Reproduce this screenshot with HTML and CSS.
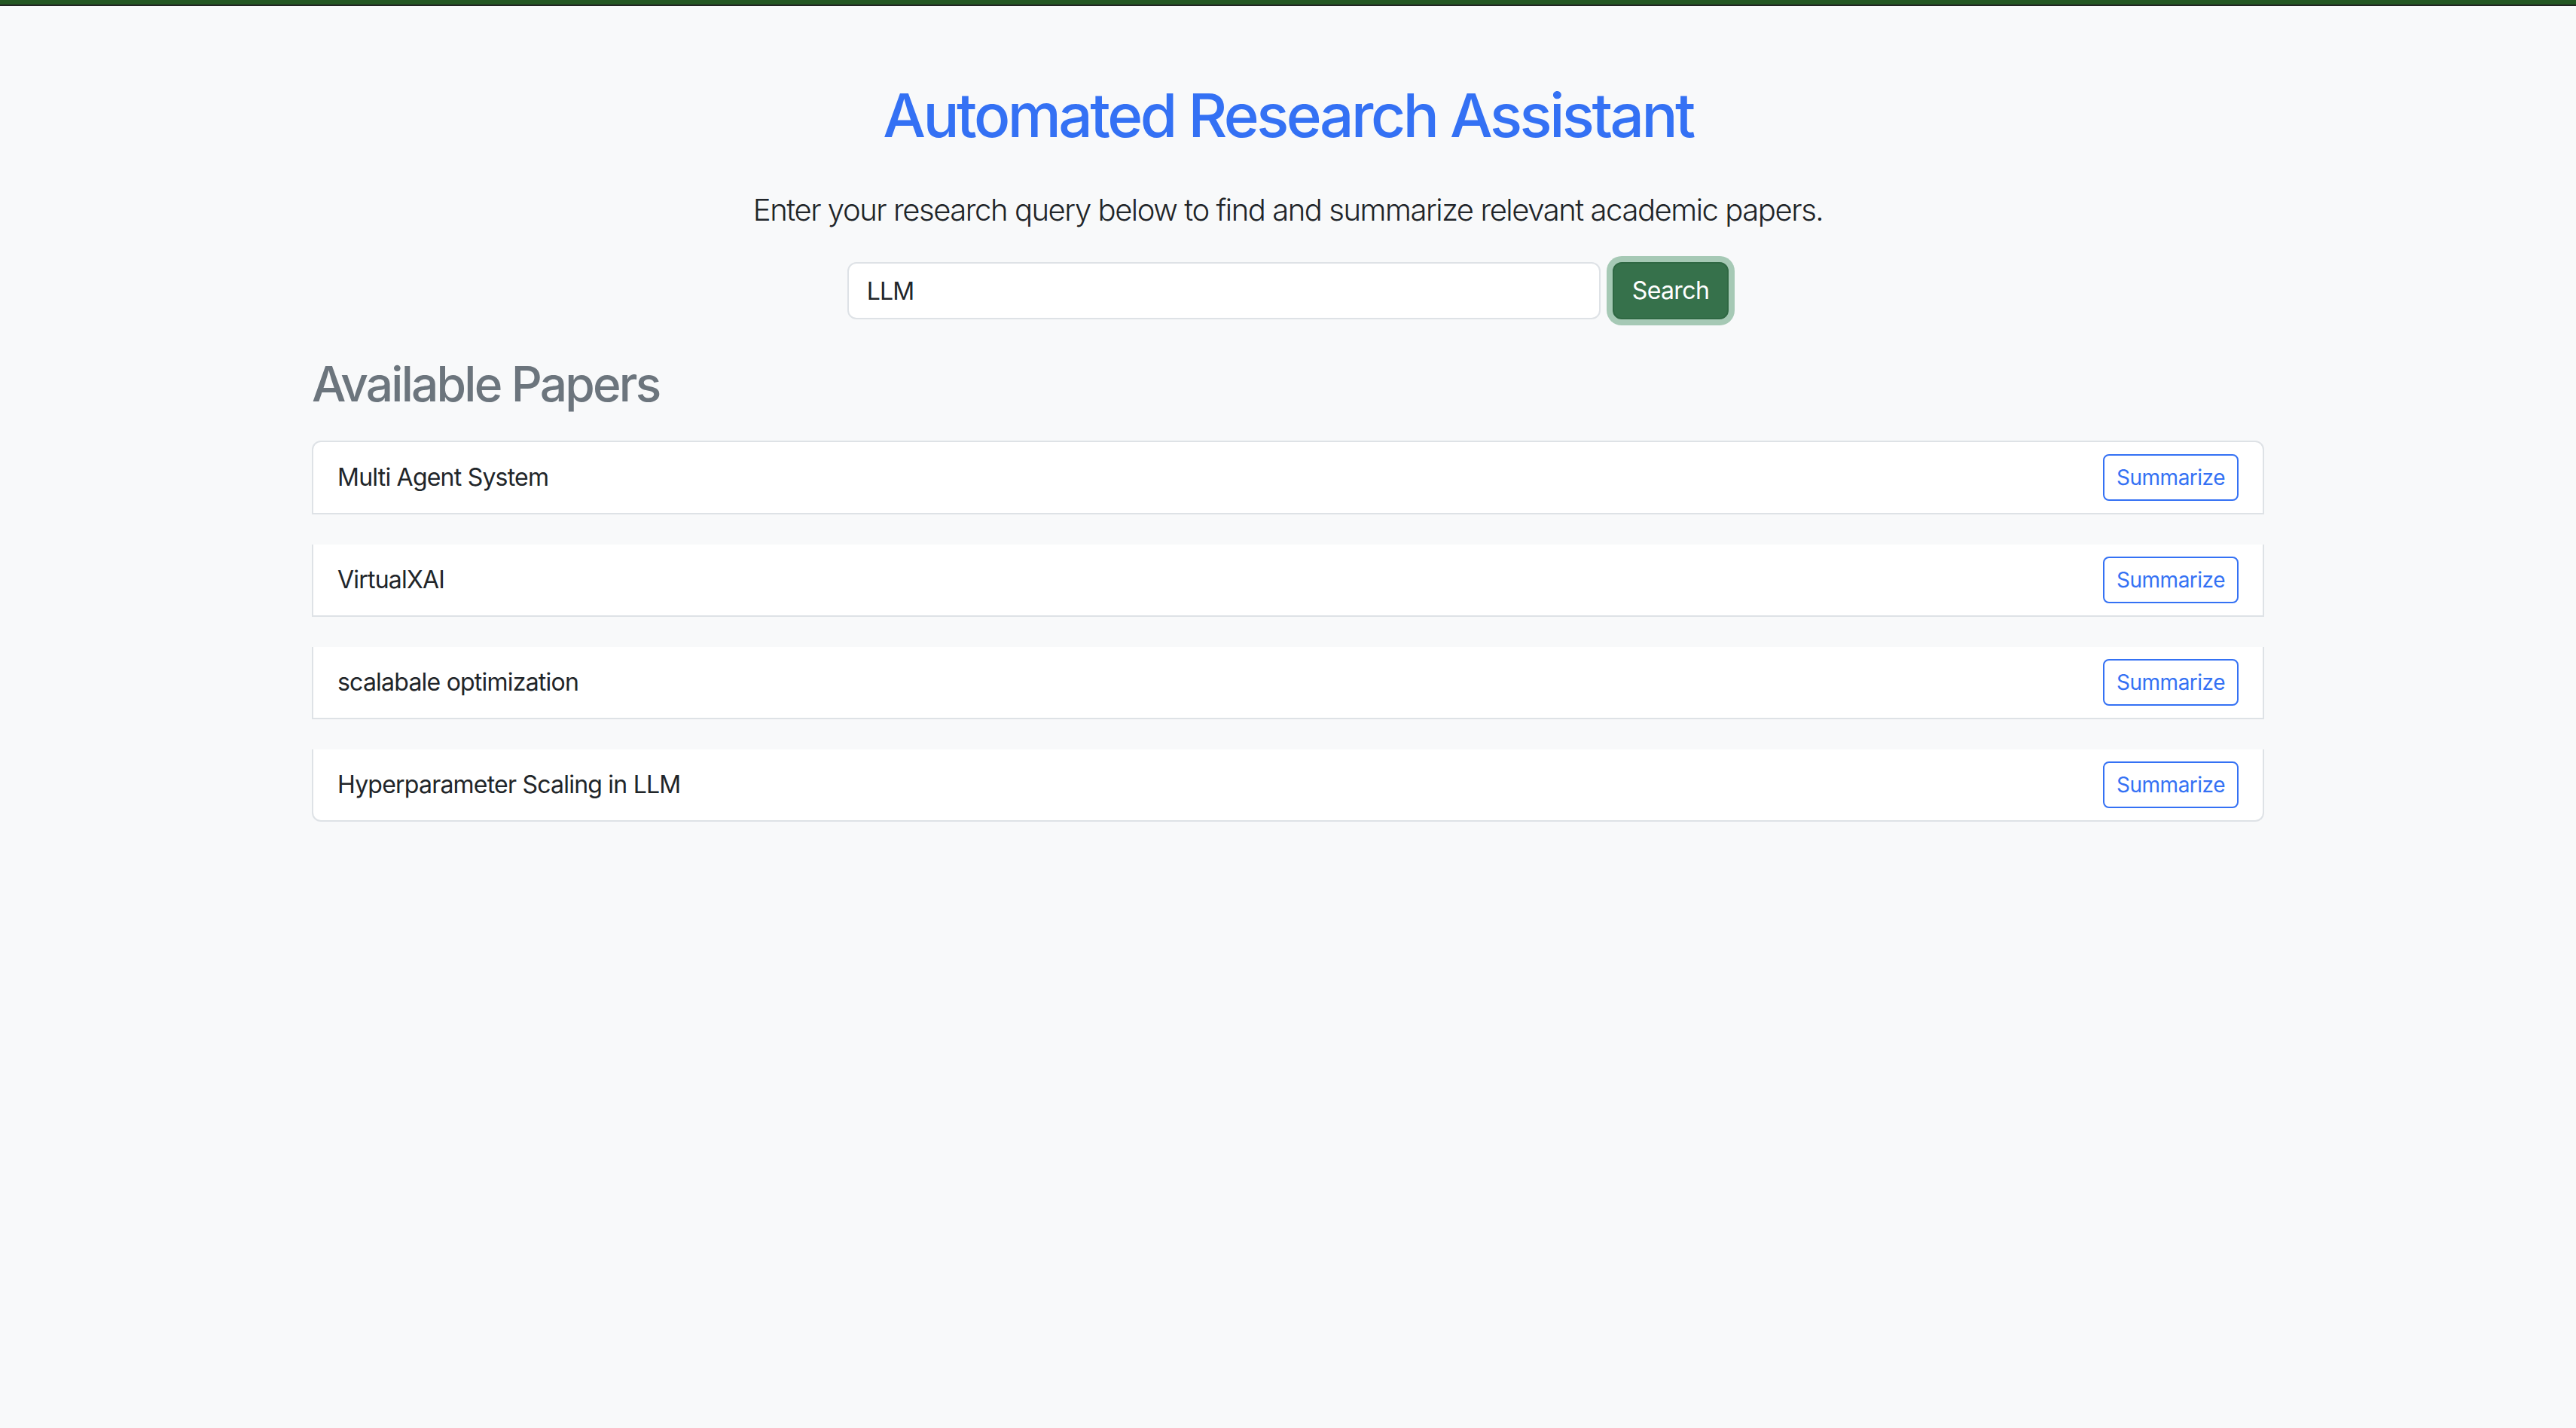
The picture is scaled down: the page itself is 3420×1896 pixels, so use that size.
FILE: index.html
```html
<!DOCTYPE html>
<html lang="en">
<head>
<meta charset="utf-8">
<title>Automated Research Assistant</title>
<link rel="stylesheet" href="styles.css">
</head>
<body>
<div class="topbar"></div>
<main class="container">
  <h1 class="title">Automated Research Assistant</h1>
  <p class="lead">Enter your research query below to find and summarize relevant academic papers.</p>
  <form class="search">
    <input class="search-input" type="text" value="LLM">
    <button class="btn-search" type="button">Search</button>
  </form>
  <h2 class="section-title">Available Papers</h2>
  <ul class="papers">
    <li class="paper"><span class="paper-name">Multi Agent System</span><button class="btn-summarize" type="button">Summarize</button></li>
    <li class="paper"><span class="paper-name">VirtualXAI</span><button class="btn-summarize" type="button">Summarize</button></li>
    <li class="paper"><span class="paper-name">scalabale optimization</span><button class="btn-summarize" type="button">Summarize</button></li>
    <li class="paper"><span class="paper-name">Hyperparameter Scaling in LLM</span><button class="btn-summarize" type="button">Summarize</button></li>
  </ul>
</main>
</body>
</html>
```
FILE: styles.css
```css
* { box-sizing: border-box; }

html, body {
  margin: 0;
  padding: 0;
}

body {
  background: #f8f9fa;
  color: #212529;
  font-family: Inter, "Noto Sans", "Liberation Sans", sans-serif;
  font-size: 32px;
  line-height: 1.5;
  letter-spacing: -0.78px;
  min-height: 1896px;
}

.topbar {
  height: 8px;
  background: #255823;
  border-bottom: 2px solid #222522;
}

.container {
  max-width: 2640px;
  margin: 0 auto;
  padding: 0 24px;
}

.title {
  margin: 97px 0 48px;
  text-align: center;
  font-size: 80px;
  line-height: 96px;
  font-weight: 500;
  letter-spacing: -3.5px;
  color: #3471f4;
}

.lead {
  margin: 0 0 39px;
  text-align: center;
  font-size: 40px;
  line-height: 60px;
  font-weight: 300;
  letter-spacing: -1.45px;
}

.search {
  display: flex;
  justify-content: center;
  align-items: center;
  gap: 16px;
  margin: 0;
}

.search-input {
  width: 1000px;
  height: 76px;
  padding: 12px 24px;
  font-family: inherit;
  font-size: 32px;
  letter-spacing: -0.78px;
  color: #212529;
  background: #fff;
  border: 2px solid #dee2e6;
  border-radius: 12px;
  outline: none;
}

.btn-search {
  height: 76px;
  padding: 12px 24px;
  font-family: inherit;
  font-size: 32px;
  line-height: 48px;
  letter-spacing: -0.6px;
  color: #fff;
  background: #36714b;
  border: 2px solid #2f6843;
  border-radius: 12px;
  box-shadow: 0 0 0 8px #a6c9b5;
}

.section-title {
  margin: 48px 0 36px;
  font-size: 64px;
  line-height: 76.8px;
  font-weight: 500;
  letter-spacing: -2.8px;
  color: #6c757d;
}

.papers {
  list-style: none;
  margin: 0;
  padding: 0;
}

.paper {
  display: flex;
  align-items: center;
  justify-content: space-between;
  padding: 16px 32px;
  margin-bottom: 40px;
  background: #fff;
  border: 2px solid #dee2e6;
  border-top-width: 0;
}

.paper:first-child {
  border-top-width: 2px;
  border-radius: 12px 12px 0 0;
}

.paper:last-child {
  border-radius: 0 0 12px 12px;
}

.paper-name {
  font-size: 32px;
  line-height: 48px;
}

.btn-summarize {
  height: 62px;
  padding: 8px 16px;
  font-family: inherit;
  font-size: 28px;
  line-height: 42px;
  letter-spacing: -0.5px;
  color: #3471f4;
  background: transparent;
  border: 2px solid #3471f4;
  border-radius: 8px;
}
```
